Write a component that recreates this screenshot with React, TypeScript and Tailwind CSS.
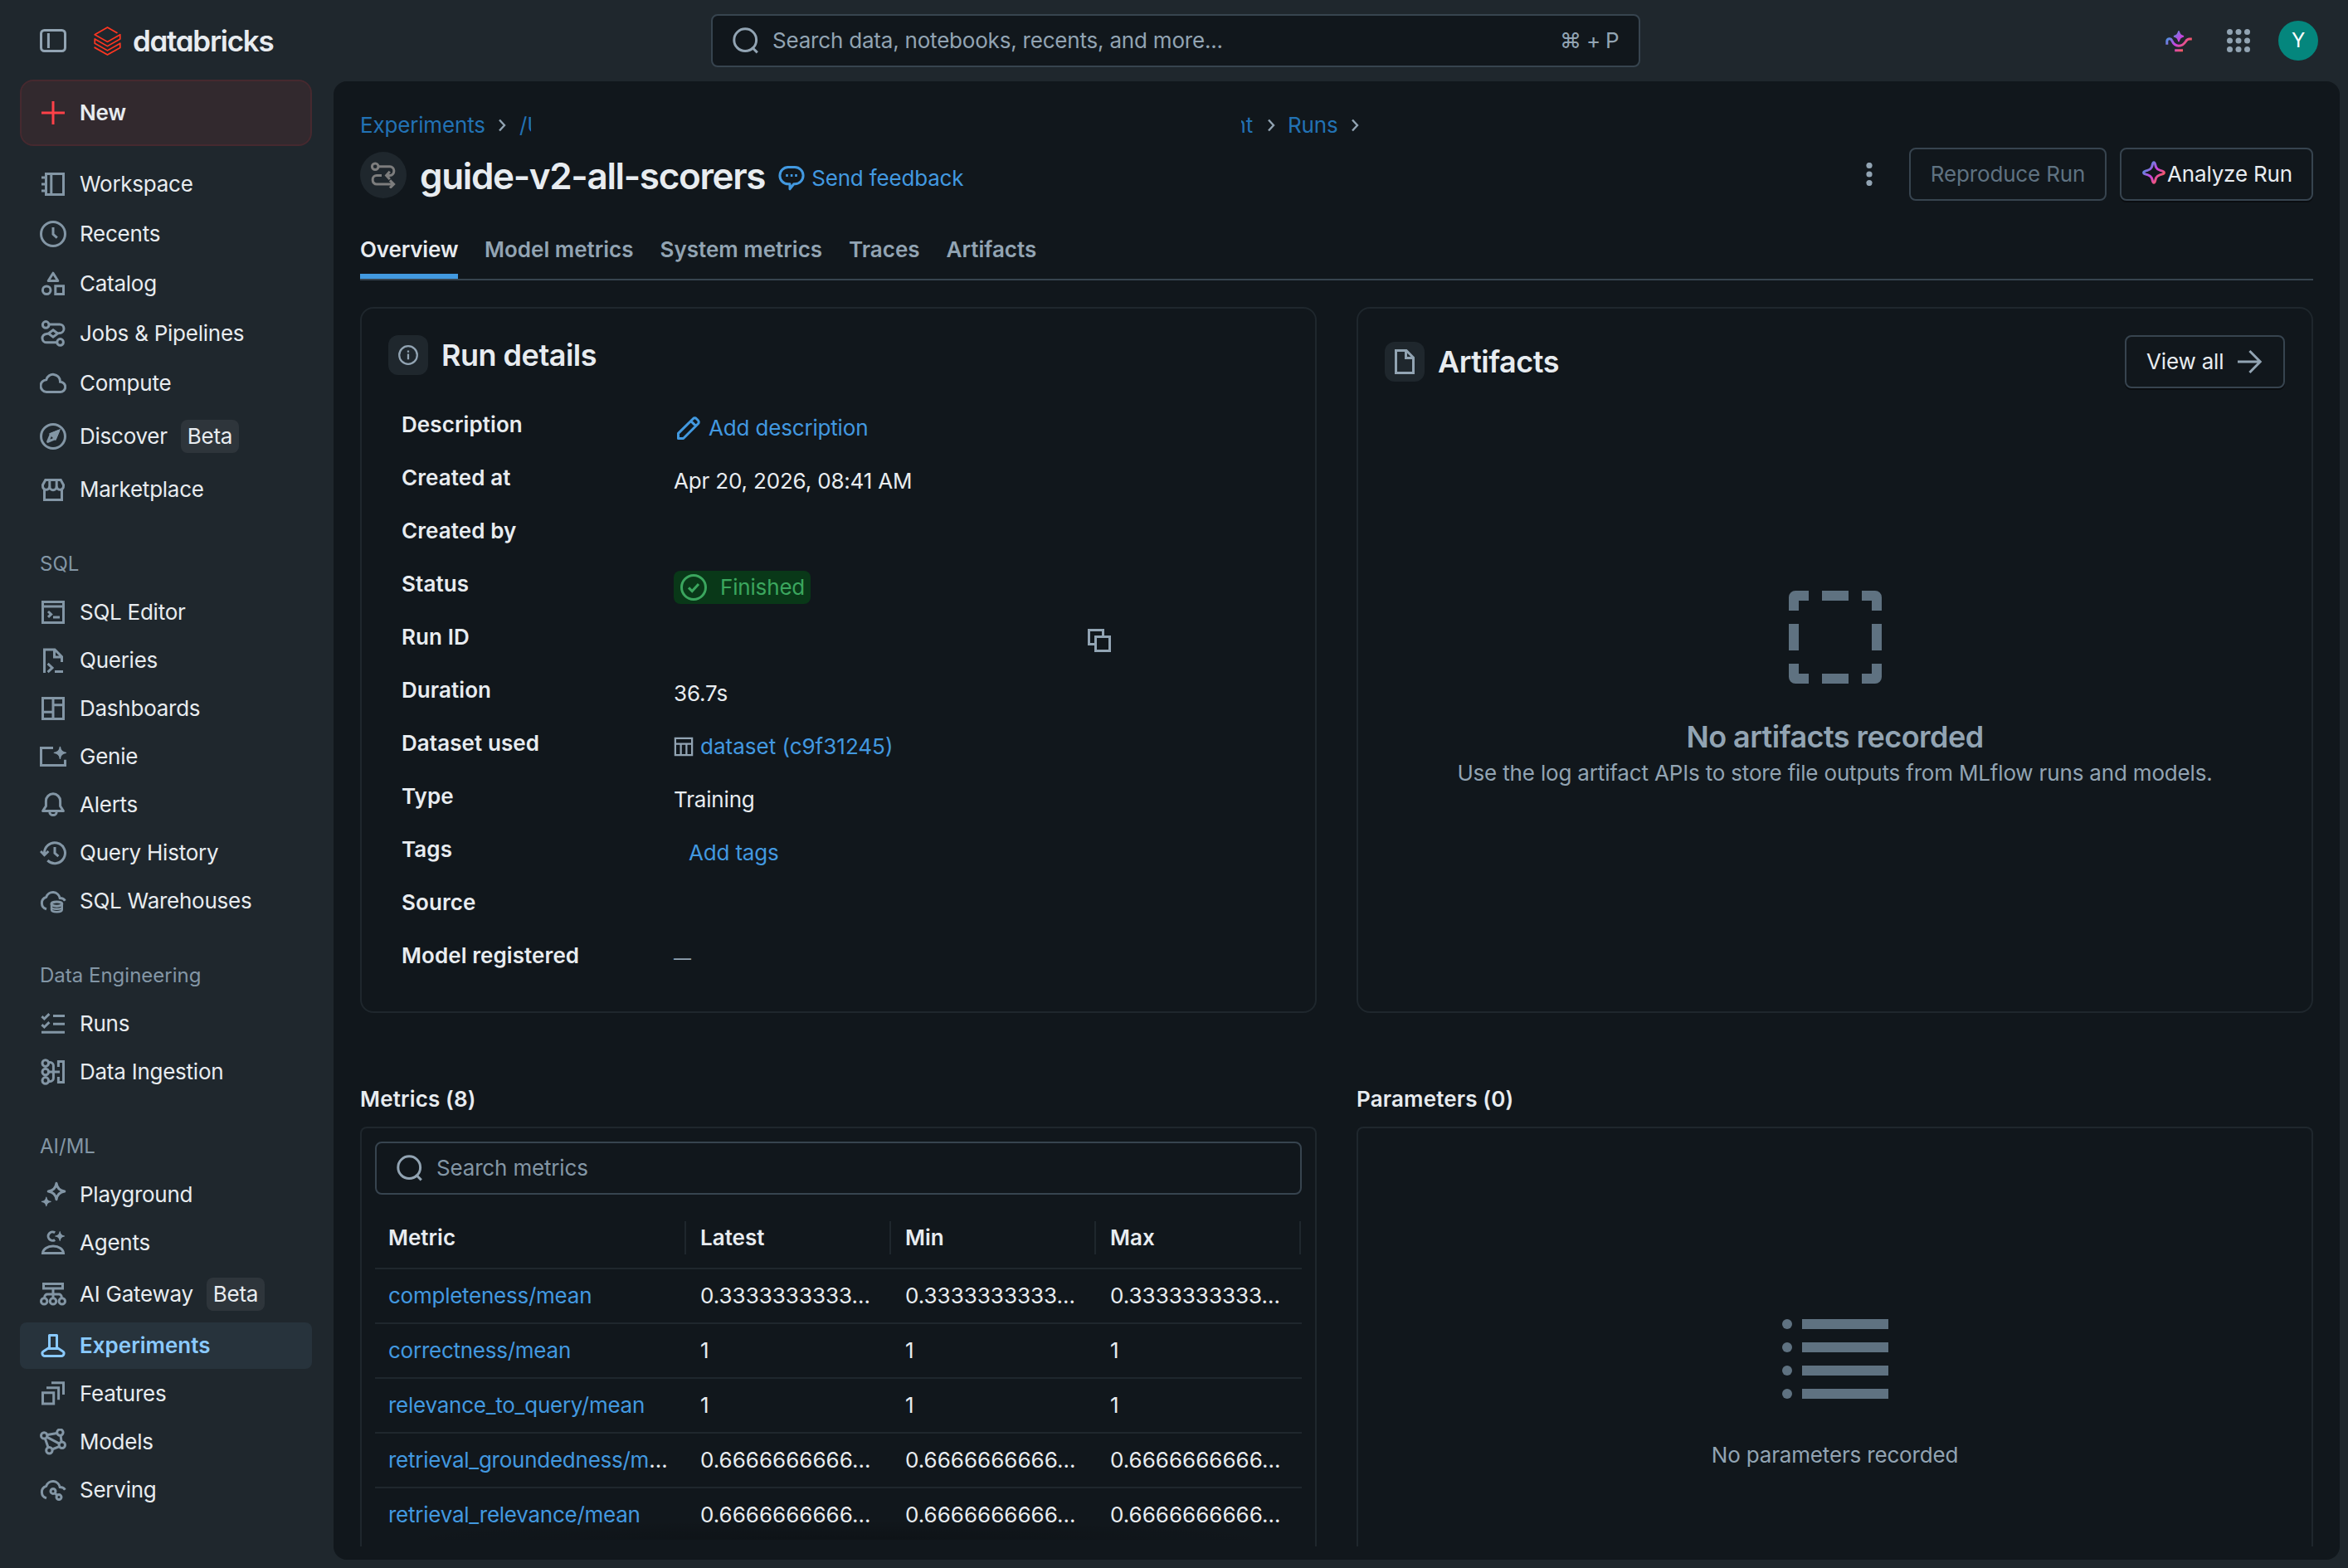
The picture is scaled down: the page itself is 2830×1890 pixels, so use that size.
import type { ReactNode } from 'react';
import { SiDatabricks } from 'react-icons/si';
import clsx from 'clsx';

const STAR = 'M8 0c.5 4.6 3.4 7.5 8 8-4.6.5-7.5 3.4-8 8-.5-4.6-3.4-7.5-8-8 4.6-.5 7.5-3.4 8-8Z';

const Icon = ({ children, className = 'size-8' }: { children: ReactNode; className?: string }) => (
  <svg
    viewBox="0 0 16 16"
    fill="none"
    stroke="currentColor"
    strokeWidth={1.5}
    className={clsx('shrink-0', className)}
  >
    {children}
  </svg>
);

// Four-pointed filled sparkle, centred on x/y with the given radius
const Sparkle = ({ x, y, r }: { x: number; y: number; r: number }) => (
  <path
    d={STAR}
    fill="currentColor"
    stroke="currentColor"
    strokeWidth={1.6}
    strokeLinejoin="round"
    transform={`translate(${x - r} ${y - r}) scale(${r / 8})`}
  />
);

const GradientDefs = ({ id }: { id: string }) => (
  <defs>
    <linearGradient id={id} x1="1" y1="3" x2="14" y2="14" gradientUnits="userSpaceOnUse">
      <stop offset="0.1" stopColor="#4299E0" />
      <stop offset="0.5" stopColor="#CA42E0" />
      <stop offset="0.9" stopColor="#FF5F46" />
    </linearGradient>
  </defs>
);

const icons: Record<string, ReactNode> = {
  Workspace: <path d="M3.75 1.75h10.5v12.5H3.75zM6.9 1.75v12.5M1 4h2.75M1 8h2.75M1 12h2.75" />,
  Recents: (
    <>
      <circle cx="8" cy="8" r="7.25" />
      <path d="M8 4v4.2l2.4 2.1" />
    </>
  ),
  Catalog: (
    <>
      <path d="M8 1.6 10.9 6.25H5.1Z" strokeLinejoin="round" />
      <circle cx="4.1" cy="11.9" r="2.4" />
      <path d="M9.4 9.4h4.85v4.85H9.4z" />
    </>
  ),
  'Jobs & Pipelines': (
    <>
      <circle cx="3.6" cy="2.7" r="1.9" />
      <circle cx="12.3" cy="13.2" r="1.9" />
      <path d="M5.5 2.5h6.2a2.6 2.6 0 0 1 .4 5.2L10.6 8M10.4 13.4H4.3a2.6 2.6 0 0 1-.4-5.2L5.4 8M8 5.9 10.8 8 8 10.1 5.2 8Z" />
    </>
  ),
  Compute: (
    <path d="M4 13.25h8.2a3.05 3.05 0 0 0 .2-6.1l-.15-.02v-.4a4.25 4.25 0 0 0-8.35-.9A3.72 3.72 0 0 0 4 13.25Z" />
  ),
  Discover: (
    <>
      <circle cx="8" cy="8" r="7.25" />
      <path d="M11.2 4.8 6.7 6.6 4.8 11.2l4.5-1.9Z" strokeLinejoin="round" />
      <path d="M11.2 4.8 6.7 6.6l2.6 2.7Z" fill="currentColor" />
    </>
  ),
  Marketplace: (
    <>
      <path d="M2.75 8v6.25h10.5V8M3.4 2.25h9.2l1.65 3v.6a2 2 0 0 1-4.15.4 2.1 2.1 0 0 1-4.2 0 2 2 0 0 1-4.15-.4v-.6Z" />
      <path d="M5.9 2.5v4M10.1 2.5v4" />
    </>
  ),
  'SQL Editor': <path d="M1.75 1.75h12.5v12.5H1.75zM1.75 4.5h12.5M5 7.5l1.8 1.7L5 10.9M8 11h4" />,
  Queries: <path d="M2.75 15.5V1.5H9l4.25 4.25V9M8.75 1.5v4.5h4.5M4.8 9.9l2.7 2.6-2.7 2.6M9 14.75h5" />,
  Dashboards: <path d="M1.75 1.75h12.5v12.5H1.75zM8 1.75v12.5M1.75 10.1H8M8 5.9h6.25" />,
  Genie: (
    <>
      <path d="M8 2.75H.75v10.5h14.5v-3.4" />
      <Sparkle x={12.2} y={5.7} r={3.5} />
    </>
  ),
  Alerts: (
    <path
      d="M8 1.4a4.3 4.3 0 0 0-4.3 4.3v3.1L1.8 11.75h12.4L12.3 8.8V5.7A4.3 4.3 0 0 0 8 1.4ZM5.9 12.2a2.1 2.1 0 0 0 4.2 0"
      strokeLinejoin="round"
    />
  ),
  'Query History': (
    <path d="M2.75 8.6a6.25 6.25 0 1 1 1.9 4M.5 7l2.25 2.3L5.2 7M9 4.5v3.7l2.2 1.9" />
  ),
  'SQL Warehouses': (
    <>
      <path d="M4 12.9a3.75 3.75 0 0 1-.2-7.2 4.3 4.3 0 0 1 8.3.6c1.5 0 2.6.7 3.1 1.6" />
      <ellipse cx="10.2" cy="9.8" rx="3.2" ry="1.3" />
      <path
        d="M7 9.8v3.4c0 .8 1.4 1.4 3.2 1.4s3.2-.6 3.2-1.4V9.8M7 11.6c0 .8 1.4 1.3 3.2 1.3s3.2-.5 3.2-1.3"
        strokeWidth={1.2}
      />
    </>
  ),
  Runs: <path d="M8 3.25h7M8 8.1h7M1 13.1h14M1.2 3.6l1.5 1.4L5.7 2.1M1.2 8.6 2.7 10l3-2.9" />,
  'Data Ingestion': (
    <>
      <circle cx="3.4" cy="2.8" r="1.9" />
      <circle cx="3.4" cy="8" r="1.9" />
      <circle cx="3.4" cy="13.2" r="1.9" />
      <path d="M5.3 2.3h.9a2 2 0 0 1 2 2v7.4a2 2 0 0 1-2 2h-.9M5.3 8H12M11.2 5V1.75h3.05v12.5H11.2V11" />
    </>
  ),
  Playground: (
    <>
      <path
        d="M10 1.1c.4 2.8 2.1 4.5 4.9 4.9-2.8.4-4.5 2.1-4.9 4.9-.4-2.8-2.1-4.5-4.9-4.9 2.8-.4 4.5-2.1 4.9-4.9Z"
        strokeLinejoin="round"
      />
      <Sparkle x={3.9} y={12.2} r={2.7} />
    </>
  ),
  Agents: (
    <>
      <path d="M9.1 1.9a2.6 2.6 0 1 0 0 4.3M1.75 14.25c.2-2.4 2.7-4.2 6.25-4.2s6.05 1.8 6.25 4.2Z" />
      <Sparkle x={12.1} y={4} r={2.7} />
    </>
  ),
  'AI Gateway': (
    <>
      <path d="M2.25 1.75h11.5v2.75H2.25zM8 4.5V10M2.9 10.2V9.6A1.6 1.6 0 0 1 4.5 8h7a1.6 1.6 0 0 1 1.6 1.6v.6" />
      <circle cx="2.6" cy="12.2" r="1.85" />
      <circle cx="8" cy="12.2" r="1.85" />
      <circle cx="13.4" cy="12.2" r="1.85" />
    </>
  ),
  Experiments: (
    <path
      d="M5.75 1.75h4.5v7.4l3.5 2.2a1.55 1.55 0 0 1-.8 2.9H3.05a1.55 1.55 0 0 1-.8-2.9l3.5-2.2ZM5.5 9.75h5"
      strokeLinejoin="round"
    />
  ),
  Features: <path d="M1.75 7.4h6.6v6.6h-6.6zM4 4.4h7.3v7.2M7 1.4h7.25V8.5" />,
  Models: (
    <>
      <circle cx="2.6" cy="4.2" r="1.85" />
      <circle cx="12.2" cy="2.3" r="1.85" />
      <circle cx="13.4" cy="9.9" r="1.85" />
      <circle cx="5.7" cy="13.1" r="1.85" />
      <path d="M4.4 3.8 10.4 2.7M3.2 6l1.8 5.3M4.2 5.1l7.6 4M12.5 4.1l.6 4M7.4 12.5l4.3-1.7" />
    </>
  ),
  Serving: (
    <>
      <path d="M4 12.9a3.75 3.75 0 0 1-.2-7.2 4.3 4.3 0 0 1 8.3.6c1.5 0 2.6.7 3.1 1.6" />
      <circle cx="8" cy="8.7" r="1.5" />
      <circle cx="11.5" cy="12.3" r="1.5" />
      <path d="m9 9.8 1.4 1.4" />
    </>
  ),
};

const navSections = [
  {
    title: '',
    items: ['Workspace', 'Recents', 'Catalog', 'Jobs & Pipelines', 'Compute', 'Discover', 'Marketplace'],
  },
  {
    title: 'SQL',
    items: ['SQL Editor', 'Queries', 'Dashboards', 'Genie', 'Alerts', 'Query History', 'SQL Warehouses'],
  },
  { title: 'Data Engineering', items: ['Runs', 'Data Ingestion'] },
  {
    title: 'AI/ML',
    items: ['Playground', 'Agents', 'AI Gateway', 'Experiments', 'Features', 'Models', 'Serving'],
  },
];

const betaItems = ['Discover', 'AI Gateway'];

const NavItem = ({ label, roomy }: { label: string; roomy: boolean }) => {
  const active = label === 'Experiments';
  const beta = betaItems.includes(label);
  return (
    <li className={clsx('flex flex-col py-px', beta ? (roomy ? 'h-[68px]' : 'h-[66px]') : roomy ? 'h-[60px]' : 'h-[58px]')}>
      <a
        className={clsx(
          'flex flex-1 items-center rounded-lg pl-6',
          active ? 'bg-[#27333c] font-semibold tracking-normal text-[#8acaff]' : 'text-[#e8ecf0]',
        )}
      >
        <Icon className={clsx('size-8', active ? 'text-[#8acaff]' : 'text-[#8396a5]')}>{icons[label]}</Icon>
        <span className="ml-4">{label}</span>
        {beta && <span className="ml-4 flex h-10 items-center rounded-lg bg-[#2e353b] px-2">Beta</span>}
      </a>
    </li>
  );
};

const Sidebar = () => (
  <nav className="flex w-[402px] shrink-0 flex-col px-6 pr-[26px] tracking-[-0.25px]">
    <button className="-mt-0.5 flex h-20 items-center rounded-2xl border-2 border-[#46292f] bg-[#32292e] pl-[22px] font-semibold text-[#e8ecf0]">
      <Icon className="size-8 text-[#ff4148]">
        <path d="M8 1v14M1 8h14" />
      </Icon>
      <span className="ml-4">New</span>
    </button>
    {navSections.map(({ title, items }, i) => (
      <section key={title} className={clsx(i === 0 ? 'mt-4' : i === 1 ? 'mt-[31px]' : 'mt-8')}>
        {title && (
          <h2 className="flex h-[58px] items-center pl-6 text-[24px] tracking-normal text-[#8396a5]">{title}</h2>
        )}
        <ul>
          {items.map((label) => (
            <NavItem key={label} label={label} roomy={i === 0} />
          ))}
        </ul>
      </section>
    ))}
  </nav>
);

const SearchIcon = () => (
  <Icon className="size-8 text-[#92a4b3]">
    <circle cx="7.6" cy="7.6" r="6.7" />
    <path d="m11.7 12 3.2 3.2" />
  </Icon>
);

const TopBar = () => (
  <header className="flex h-[98px] shrink-0 items-center pr-9 pl-12">
    <div className="flex w-[809px] items-center">
      <Icon className="size-8 text-[#92a4b3]">
        <rect x=".75" y="1.75" width="14.5" height="12.5" rx="2" />
        <path d="M5.2 3.5v9" />
      </Icon>
      <SiDatabricks className="ml-8 size-[35px] text-[#ff3621]" />
      <span className="ml-[13px] text-[35px] leading-none font-semibold tracking-[-1.3px] text-[#e8ecf0] [font-feature-settings:'cv11']">
        databricks
      </span>
    </div>
    <div className="flex h-16 w-[1120px] items-center rounded-lg border-2 border-[#37444f] bg-[#11171c] pr-6 pl-6 text-[#92a4b3]">
      <SearchIcon />
      <span className="ml-4 tracking-[-0.2px]">Search data, notebooks, recents, and more...</span>
      <span className="ml-auto tracking-[-0.7px]">⌘ + P</span>
    </div>
    <div className="ml-auto flex items-center">
      <Icon className="size-8">
        <GradientDefs id="genie" />
        <g stroke="url(#genie)">
          <path d="M.9 10.4V8.3a1.5 1.5 0 0 1 2.9-.5C4.8 10 5.8 11.1 8 11.1c2.3 0 3.3-1.2 4.2-2.6.6-1 1.2-1.5 2.2-1.5h1.5M5.6 13.9h4.9" />
          <path
            d="M8 2.2c.3 1.8 1.3 2.9 3 3.2-1.7.3-2.7 1.4-3 3.2-.3-1.8-1.3-2.9-3-3.2 1.7-.3 2.7-1.4 3-3.2Z"
            fill="url(#genie)"
            strokeWidth={0.8}
          />
        </g>
      </Icon>
      <svg viewBox="0 0 28 28" fill="#92a4b3" className="ml-[42px] size-7">
        {[3.5, 14, 24.5].map((y) => [3.5, 14, 24.5].map((x) => <circle key={`${x}-${y}`} cx={x} cy={y} r="3.5" />))}
      </svg>
      <span className="ml-[34px] flex size-12 items-center justify-center rounded-full bg-[#04867d] text-[24px] text-white">
        Y
      </span>
    </div>
  </header>
);

const Chevron = () => (
  <svg viewBox="0 0 10 16" fill="none" stroke="#92a4b3" strokeWidth="2.4" className="h-4 w-2.5">
    <path d="m2 1.5 6 6.5-6 6.5" />
  </svg>
);

const Breadcrumb = () => (
  <div className="flex h-10 items-center text-[#2272b4]">
    <span className="w-[150px]">Experiments</span>
    <span className="ml-4">
      <Chevron />
    </span>
    <span className="ml-4 w-[14px] overflow-hidden whitespace-nowrap">/U</span>
    {/* Name of the experiment is hidden apart from its last letters */}
    <span className="ml-[856px] flex w-[14px] justify-end overflow-hidden">nt</span>
    <span className="ml-[17px]">
      <Chevron />
    </span>
    <span className="ml-[15px] w-[60px]">Runs</span>
    <span className="ml-4">
      <Chevron />
    </span>
  </div>
);

const PageTitle = () => (
  <div className="mt-[7px] flex h-16 items-center">
    <span className="mt-0.5 flex size-14 items-center justify-center rounded-full bg-[#1f272d] text-[#7d7d7d]">
      <Icon className="size-8">
        <circle cx="3.1" cy="2.9" r="1.9" />
        <path d="M5 2.9h7a2.4 2.4 0 0 1 2.4 2.4v.5A2.4 2.4 0 0 1 12 8.2h-2M11.9 5.9 9.8 8.2l2.1 2.3M7 8.2H4a2.4 2.4 0 0 0-2.4 2.4v.5A2.4 2.4 0 0 0 4 13.5h10.2M12 11.2l2.3 2.3-2.3 2.3" />
      </Icon>
    </span>
    <h1 className="mt-1 ml-4 text-[44px] leading-[56px] font-semibold tracking-[-1.35px] text-[#e8ecf0]">
      guide-v2-all-scorers
    </h1>
    <span className="mt-2.5 ml-4 flex items-center text-[#4299e0]">
      <Icon className="size-8">
        <path d="M6 1.25h4a5 5 0 0 1 0 10.1h-.6L7 14.4v-3H6a5 5 0 0 1 0-10.1Z" strokeLinejoin="round" />
        <path d="M4.6 6.3h1.3M7.4 6.3h1.3M10.1 6.3h1.3" />
      </Icon>
      <span className="ml-2">Send feedback</span>
    </span>
    <div className="ml-auto flex items-center">
      <svg viewBox="0 0 8 28" fill="#92a4b3" className="h-7 w-2">
        <circle cx="4" cy="3.5" r="3.6" />
        <circle cx="4" cy="14" r="3.6" />
        <circle cx="4" cy="24.5" r="3.6" />
      </svg>
      <button className="ml-11 h-16 w-[238px] rounded-lg border-2 border-[#37444f] text-[#5f7281]">Reproduce Run</button>
      <button className="ml-4 flex h-16 w-[233px] items-center justify-center rounded-lg border-2 border-[#37444f] text-[#e8ecf0] shadow-[0_2px_0_#0a0d10]">
        <Icon className="-mt-1 size-8">
          <GradientDefs id="spark" />
          <path
            d="M8 1.9c.9 0 .7 1.6 1.4 3 .7 1.4 1.6 1.5 2.9 1.9 1 .3 1.9.4 1.9 1.2s-.9.9-1.9 1.2c-1.3.4-2.2.5-2.9 1.9-.7 1.4-.5 3-1.4 3s-.7-1.6-1.4-3c-.7-1.4-1.6-1.5-2.9-1.9-1-.3-1.9-.4-1.9-1.2s.9-.9 1.9-1.2c1.3-.4 2.2-.5 2.9-1.9.7-1.4.5-3 1.4-3Z"
            stroke="url(#spark)"
          />
        </Icon>
        Analyze Run
      </button>
    </div>
  </div>
);

const tabs = ['Overview', 'Model metrics', 'System metrics', 'Traces', 'Artifacts'];

const Tabs = () => (
  <div className="mt-9 flex h-[60px] gap-8 border-b-2 border-[#37444f] font-semibold tracking-normal text-[#92a4b3]">
    {tabs.map((tab, i) => (
      <span
        key={tab}
        className={clsx(
          'h-[58px] pt-[3px]',
          i === 0 && 'w-[118px] border-b-[6px] border-[#4299e0] tracking-[-0.15px] text-[#e8ecf0]',
        )}
      >
        {tab}
      </span>
    ))}
  </div>
);

const CardIcon = ({ children }: { children: ReactNode }) => (
  <span className="flex size-12 items-center justify-center rounded-xl bg-[#1f272d] text-[#92a4b3]">{children}</span>
);

const Link = ({ children }: { children: ReactNode }) => <span className="text-[#4299e0]">{children}</span>;

const details: { label: string; value?: ReactNode }[] = [
  {
    label: 'Description',
    value: (
      <span className="flex items-center pl-0.5 text-[#4299e0]">
        <Icon className="size-8">
          <path
            d="M1.75 11.2v3.05H4.8l8.9-8.9a1.4 1.4 0 0 0 0-2l-1-1a1.4 1.4 0 0 0-2 0ZM9.3 3.7l3 3"
            strokeLinejoin="round"
          />
        </Icon>
        <span className="ml-2">Add description</span>
      </span>
    ),
  },
  { label: 'Created at', value: 'Apr 20, 2026, 08:41 AM' },
  { label: 'Created by' },
  {
    label: 'Status',
    value: (
      <span className="flex h-10 w-[165px] items-center rounded-lg bg-[#093818] pl-2 text-[#3ba65e]">
        <Icon className="size-8">
          <circle cx="8" cy="8" r="7.25" />
          <path d="m5 8.2 2.1 2.1L11 6" />
        </Icon>
        <span className="ml-4">Finished</span>
      </span>
    ),
  },
  {
    label: 'Run ID',
    value: (
      <Icon className="ml-[497px] size-8 text-[#92a4b3]">
        <path d="M5.75 5.75h8.5v8.5h-8.5zM5.5 10.25H1.75v-8.5h8.5V5.5" />
      </Icon>
    ),
  },
  { label: 'Duration', value: '36.7s' },
  {
    label: 'Dataset used',
    value: (
      <span className="flex items-center tracking-normal">
        <Icon className="size-6 text-[#92a4b3]">
          <path d="M1.25 1.25h13.5v13.5H1.25zM1.25 5.75h13.5M5.75 5.75v9M10.25 5.75v9" />
        </Icon>
        <span className="ml-2">
          <Link>dataset (c9f31245)</Link>
        </span>
      </span>
    ),
  },
  { label: 'Type', value: 'Training' },
  { label: 'Tags', value: <span className="ml-[18px] text-[#4299e0]">Add tags</span> },
  { label: 'Source' },
  { label: 'Model registered', value: <span className="text-[21px] text-[#92a4b3]">—</span> },
];

const RunDetails = () => (
  <section className="h-[851px] rounded-2xl border-2 border-[#1f272d] p-8">
    <div className="flex h-12 items-center">
      <CardIcon>
        <Icon className="size-6">
          <circle cx="8" cy="8" r="7.2" />
          <path d="M8 7v4.5M8 4.3v1.5" />
        </Icon>
      </CardIcon>
      <h2 className="ml-4 text-[36px] font-semibold tracking-[-0.5px] text-[#e8ecf0]">Run details</h2>
    </div>
    <dl className="mt-8 pl-4">
      {details.map(({ label, value }) => (
        <div key={label} className="flex h-16 pt-2">
          <dt className="w-[328px] font-semibold tracking-[0.08px] text-[#e8ecf0]">{label}</dt>
          <dd className="flex h-12 items-center text-[#e8ecf0]">{value}</dd>
        </div>
      ))}
    </dl>
  </section>
);

const ArtifactsCard = () => (
  <section className="h-[851px] rounded-2xl border-2 border-[#1f272d] p-8">
    <div className="flex h-16 items-center">
      <CardIcon>
        <Icon className="size-8">
          <path d="M2.75 1.25H9l4.25 4.25v9.25H2.75ZM8.75 1.25v4.5h4.5" />
        </Icon>
      </CardIcon>
      <h2 className="ml-4 text-[36px] font-semibold tracking-[-0.5px] text-[#e8ecf0]">Artifacts</h2>
      <button className="ml-auto flex h-16 w-[193px] items-center rounded-lg border-2 border-[#37444f] pl-6 text-[#e8ecf0] shadow-[0_2px_0_#0a0d10]">
        <span className="w-[92px] whitespace-nowrap">View all</span>
        <Icon className="ml-4 size-8">
          <path d="M1 8h13M8.2 1.5 14.6 8l-6.4 6.5" stroke="#92a4b3" />
        </Icon>
      </button>
    </div>
    <div className="mt-[236px] flex flex-col items-center text-[#92a4b3]">
      <Icon className="size-32 text-[#5f7281]">
        <path d="M1.75 4V2a.25.25 0 0 1 .25-.25h2M6 1.75h4M12 1.75h2a.25.25 0 0 1 .25.25v2M14.25 6v4M14.25 12v2a.25.25 0 0 1-.25.25h-2M10 14.25H6M4 14.25H2a.25.25 0 0 1-.25-.25v-2M1.75 10V6" />
      </Icon>
      <h3 className="mt-8 text-[36px] leading-[48px] font-semibold tracking-[-0.55px]">No artifacts recorded</h3>
      <p>Use the log artifact APIs to store file outputs from MLflow runs and models.</p>
    </div>
  </section>
);

const metrics = [
  { name: 'completeness/mean', value: '0.3333333333…' },
  { name: 'correctness/mean', value: '1' },
  { name: 'relevance_to_query/mean', value: '1' },
  { name: 'retrieval_groundedness/m', value: '0.6666666666…', cut: true },
  { name: 'retrieval_relevance/mean', value: '0.6666666666…' },
];

const columns = ['Metric', 'Latest', 'Min', 'Max'];

const Metrics = () => (
  <section className="flex min-h-0 flex-col">
    <h2 className="h-10 font-semibold tracking-[0.15px]">Metrics (8)</h2>
    <div className="mt-[13px] flex min-h-0 flex-1 flex-col rounded-t-lg border-2 border-b-0 border-[#1f272d] px-4 pt-4 pb-2">
      <div className="flex h-16 shrink-0 items-center rounded-lg border-2 border-[#37444f] pl-6 text-[#92a4b3]">
        <SearchIcon />
        <span className="ml-4 text-[#8396a5]">Search metrics</span>
      </div>
      <div className="relative mt-4 min-h-0 flex-1 overflow-hidden tracking-normal">
        <div className="grid h-[74px] grid-cols-[376px_247px_247px_247px] border-b-2 border-[#1f272d] pt-4 font-semibold">
          {columns.map((column) => (
            <span key={column} className="mr-px h-10 border-r-2 border-[#1f272d] pl-4">
              {column}
            </span>
          ))}
        </div>
        {metrics.map(({ name, value, cut }) => (
          <div
            key={name}
            className="grid h-[66px] grid-cols-[376px_247px_247px_247px] items-center border-b-2 border-[#1f272d] *:pl-4 *:whitespace-nowrap"
          >
            <span className="tracking-[-0.25px]">
              <Link>{name}</Link>
              {cut && '…'}
            </span>
            <span>{value}</span>
            <span>{value}</span>
            <span>{value}</span>
          </div>
        ))}
        {/* Scroll shadow */}
        <div className="absolute inset-x-0 bottom-0 h-6 bg-[radial-gradient(farthest-side_at_50%_100%,rgba(0,0,0,0.2),transparent)]" />
      </div>
    </div>
  </section>
);

const Parameters = () => (
  <section className="flex min-h-0 flex-col">
    <h2 className="h-10 font-semibold tracking-[0.15px]">Parameters (0)</h2>
    <div className="mt-[13px] flex flex-1 flex-col items-center rounded-t-lg border-2 border-b-0 border-[#1f272d] pt-[230px] text-[#92a4b3]">
      <svg viewBox="0 0 128 96" fill="#5f7281" className="h-24 w-32">
        {[6, 34, 62, 90].map((y) => (
          <g key={y}>
            <circle cx="6" cy={y} r="6" />
            <rect x="24" y={y - 6} width="104" height="12" />
          </g>
        ))}
      </svg>
      <p className="mt-12">No parameters recorded</p>
    </div>
  </section>
);

const App = () => (
  <div className="flex h-[1890px] w-[2830px] flex-col overflow-hidden bg-[#1f272d] font-['Inter',sans-serif] text-[26px] leading-10 tracking-[-0.17px] text-[#e8ecf0]">
    <TopBar />
    <div className="flex min-h-0 flex-1">
      <Sidebar />
      <main className="mr-2.5 mb-2.5 flex min-w-0 flex-1 flex-col rounded-2xl bg-[#11171c] px-8 pt-[33px] pb-4">
        <Breadcrumb />
        <PageTitle />
        <Tabs />
        <div className="mt-8 grid grid-cols-2 gap-12">
          <RunDetails />
          <ArtifactsCard />
        </div>
        <div className="mt-[84px] grid min-h-0 flex-1 grid-cols-2 gap-12">
          <Metrics />
          <Parameters />
        </div>
      </main>
    </div>
  </div>
);

export default App;
